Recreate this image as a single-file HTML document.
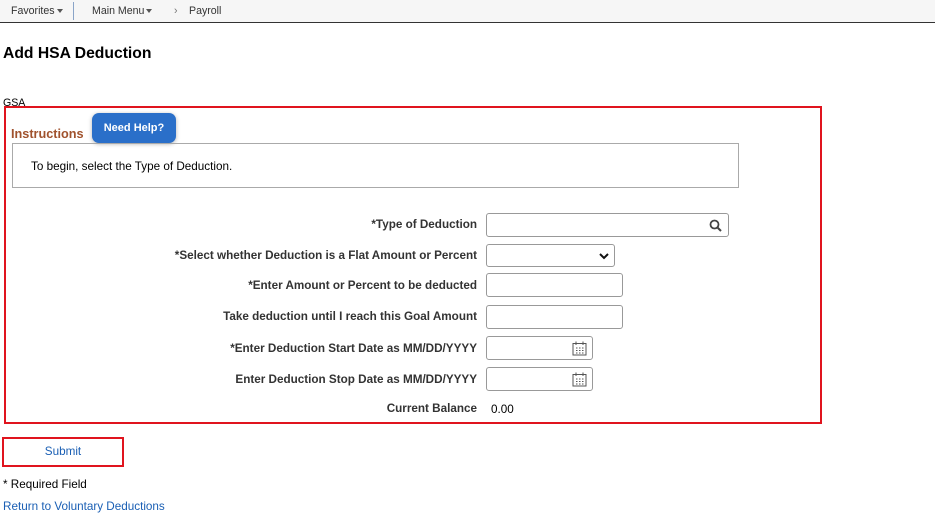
<!DOCTYPE html>
<html><head><style>
*{box-sizing:border-box}
body{margin:0;width:935px;height:523px;background:#fff;font-family:"Liberation Sans",Arial,sans-serif;position:relative;overflow:hidden;color:#000}
.a{position:absolute}
.hdr{left:0;top:0;width:935px;height:23px;background:#f6f6f6;border-bottom:1px solid #333;font-size:10.6px;color:#333}
.lbl{font-size:11.7px;font-weight:bold;color:#333;right:458px;text-align:right;white-space:nowrap}
.in{border:1px solid #999;border-radius:3px;background:#fff;height:24px}
.car{display:inline-block;border-left:3px solid transparent;border-right:3px solid transparent;border-top:4px solid #555;vertical-align:middle;margin-left:2px}
</style></head><body>
<div class="a hdr">
<span class="a" style="left:11px;top:5px">Favorites<span class="car"></span></span>
<div class="a" style="left:73px;top:2px;width:1px;height:18px;background:#8aa4c8"></div>
<span class="a" style="left:92px;top:5px">Main Menu<span class="car"></span></span>
<span class="a" style="left:174px;top:5px;color:#777">›</span>
<span class="a" style="left:189px;top:5px">Payroll</span>
</div>
<div class="a" style="left:3px;top:45px;font-size:15.7px;font-weight:bold">Add HSA Deduction</div>
<div class="a" style="left:3px;top:97px;font-size:10.6px">GSA</div>
<div class="a" style="left:4px;top:106px;width:818px;height:318px;border:2px solid #e0141e"></div>
<div class="a" style="left:11px;top:127px;font-size:12.7px;font-weight:bold;color:#a0522d">Instructions</div>
<div class="a" style="left:92px;top:113px;width:84px;height:30px;background:#2a6fc9;border-radius:7px;color:#fff;font-size:11px;font-weight:bold;text-align:center;line-height:30px;box-shadow:0 1px 4px rgba(0,0,0,.3)">Need Help?</div>
<div class="a" style="left:12px;top:143px;width:727px;height:45px;border:1px solid #aaa"></div>
<div class="a" style="left:31px;top:160px;font-size:11.7px">To begin, select the Type of Deduction.</div>

<div class="a lbl" style="top:218px">*Type of Deduction</div>
<div class="a in" style="left:486px;top:213px;width:243px"><svg class="a" style="right:6px;top:5px" width="13" height="13" viewBox="0 0 13 13"><circle cx="5.5" cy="5.5" r="4" fill="none" stroke="#444" stroke-width="1.8"/><path d="M8.5 8.5L12 12" stroke="#444" stroke-width="2"/></svg></div>
<div class="a lbl" style="top:249px">*Select whether Deduction is a Flat Amount or Percent</div>
<div class="a in" style="left:486px;top:244px;width:129px;height:23px"><svg class="a" style="right:5px;top:7px" width="10" height="8" viewBox="0 0 10 8"><path d="M1 2L5 6L9 2" fill="none" stroke="#111" stroke-width="2"/></svg></div>
<div class="a lbl" style="top:279px">*Enter Amount or Percent to be deducted</div>
<div class="a in" style="left:486px;top:273px;width:137px"></div>
<div class="a lbl" style="top:310px">Take deduction until I reach this Goal Amount</div>
<div class="a in" style="left:486px;top:305px;width:137px"></div>
<div class="a lbl" style="top:342px">*Enter Deduction Start Date as MM/DD/YYYY</div>
<div class="a in" style="left:486px;top:336px;width:107px"><svg class="a" style="right:5px;top:4px" width="15" height="15" viewBox="0 0 15 15"><rect x="1" y="2.5" width="13" height="11.5" fill="none" stroke="#555"/><path d="M4 0.5V4M11 0.5V4" stroke="#555"/><path d="M4 7h1.5M7 7h1.5M10 7h1.5M4 9.5h1.5M7 9.5h1.5M10 9.5h1.5M4 12h1.5M7 12h1.5M10 12h1.5" stroke="#555"/></svg></div>
<div class="a lbl" style="top:373px">Enter Deduction Stop Date as MM/DD/YYYY</div>
<div class="a in" style="left:486px;top:367px;width:107px"><svg class="a" style="right:5px;top:4px" width="15" height="15" viewBox="0 0 15 15"><rect x="1" y="2.5" width="13" height="11.5" fill="none" stroke="#555"/><path d="M4 0.5V4M11 0.5V4" stroke="#555"/><path d="M4 7h1.5M7 7h1.5M10 7h1.5M4 9.5h1.5M7 9.5h1.5M10 9.5h1.5M4 12h1.5M7 12h1.5M10 12h1.5" stroke="#555"/></svg></div>
<div class="a lbl" style="top:402px">Current Balance</div>
<div class="a" style="left:491px;top:403px;font-size:11.7px">0.00</div>

<div class="a" style="left:2px;top:437px;width:122px;height:30px;border:2px solid #e0141e;text-align:center;line-height:26px;font-size:11.7px;color:#1a5fb4">Submit</div>
<div class="a" style="left:3px;top:478px;font-size:11.7px">* Required Field</div>
<div class="a" style="left:3px;top:500px;font-size:11.7px;color:#1a5fb4">Return to Voluntary Deductions</div>
</body></html>
